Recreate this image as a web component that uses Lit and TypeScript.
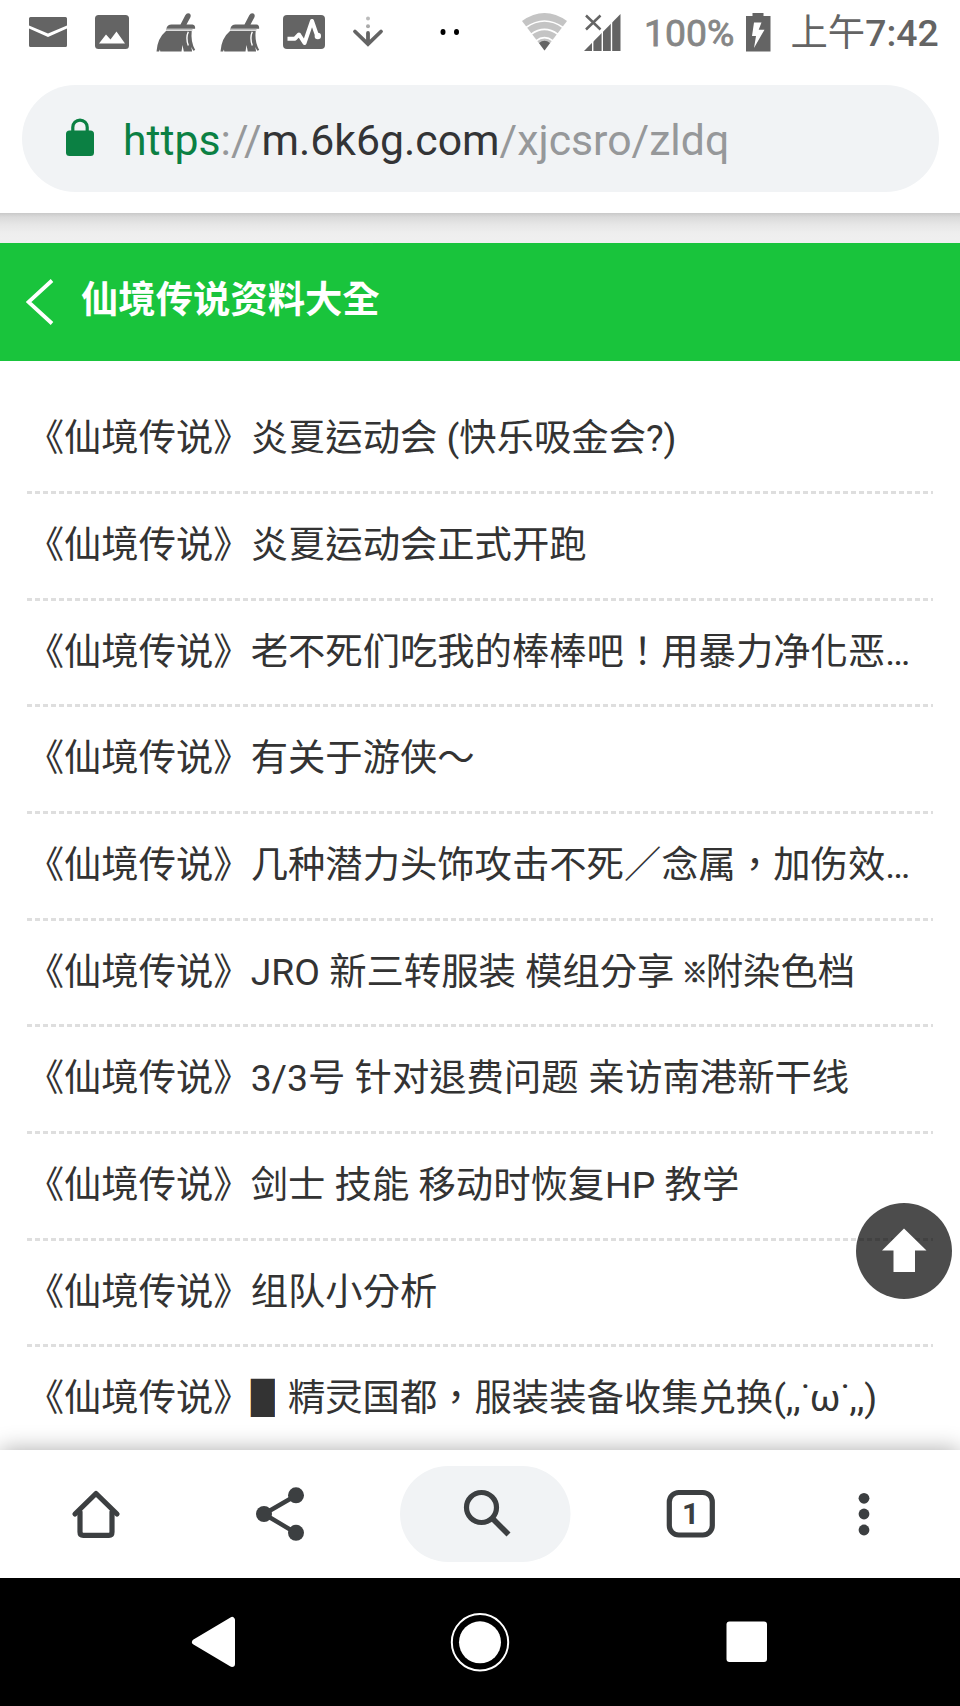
import { LitElement, html, css, svg } from "lit";
import { customElement } from "lit/decorators.js";

const SANS = css`Roboto, "Noto Sans CJK TC", "Noto Sans CJK SC", sans-serif`;

@customElement("status-bar")
class StatusBar extends LitElement {
  static styles = css`
    :host { display: block; height: 64px; position: relative; color: #646464; font: 500 37.33px ${SANS}; }
    .icons { display: block; }
    .battery-text, .clock { position: absolute; top: 11px; line-height: 44px; white-space: nowrap; }
    .battery-text { left: 644px; color: #868686; font-weight: 400; -webkit-text-stroke: 0.8px #868686; }
    .clock { left: 790.5px; }
    .period { font-weight: 400; }
  `;
  broom(x: number) {
    return svg`<g transform="translate(${x} 0)" fill="#646464">
      <path d="M28.8 15.2 Q30.5 12.3 33 13.6 Q35 15 33.8 17.6 L30 24.5 H36 Q39 25 38.6 28.7 H9.8 Q11 24.5 15 24.5 H24 Z"/>
      <path d="M9.5 31 H35.2 Q34 42 38.7 50 L36.8 50.8 L34.8 47 L35.6 51.4 H27.3 L26 45 L25 51.4 H3.8 L3.4 49.5 L2.6 51.4 H0 Q1 38 9.5 31 Z"/>
      <path d="M9.500 29.700 H36" stroke="#bbb" stroke-width="1.600"/>
      <path d="M31.8 31.800 Q29 38 31.8 45.500" fill="none" stroke="#fff" stroke-width="1.4"/>
    </g>`;
  }
  render() {
    return html`
      <svg class="icons" width="960" height="64" viewBox="0 0 960 64">
        <path fill="#646464" d="M29 18.500 q0-1.500 1.500-1.500 h35 q1.500 0 1.500 1.500 v7 L48 33.500 L29 25.500 Z M29 28.500 L48 37 L67 28.500 V45.500 q0 1.500-1.500 1.500 H30.500 q-1.500 0-1.500-1.500 Z"/>
        <rect x="95" y="15" width="34" height="34" rx="3.5" fill="#646464"/>
        <path fill="#fff" d="M99 43.500 L106 34.500 L110.500 39.500 L116.500 31.500 L125 43.500 Z"/>
        ${this.broom(156.5)}${this.broom(220.5)}
        <rect x="283" y="15" width="42" height="34" rx="4" fill="#646464"/>
        <path fill="none" stroke="#fff" stroke-width="4" stroke-linejoin="round" d="M287.500 38.700 H295 L299 34.500 L304.500 43 L312 21 L316.500 34"/>
        <circle cx="317.8" cy="36" r="3.2" fill="#fff"/>
        <circle cx="368" cy="18.5" r="2" fill="#bbb"/><circle cx="368" cy="26.3" r="2" fill="#aaa"/>
        <path fill="none" stroke="#646464" stroke-width="3.8" d="M368 33 V43 M355 31.500 L368 44 L381 31.500" stroke-linecap="round"/>
        <ellipse cx="443" cy="32" rx="2.5" ry="3"/><ellipse cx="456.5" cy="32" rx="2.5" ry="3"/>
        <path fill="#c4c4c4" d="M522 21 Q544.500 5 567 21 L544.500 50.500 Z"/>
        <g fill="none" stroke="#fff" stroke-width="1.6">
          <path d="M526 27.500 Q544.500 14.500 563 27.500"/><path d="M531 34.300 Q544.500 24.500 558 34.300"/><path d="M536 40.800 Q544.500 34.500 553 40.800"/>
        </g>
        <path fill="#646464" d="M539 43 Q544.500 38.500 550 43 L544.500 50.500 Z"/>
        <path fill="#646464" d="M584 51 L620.500 14 V51 Z"/>
        <path stroke="#fff" stroke-width="1.4" d="M592.700 38V51 M602.300 28V51 M611.500 18V51"/>
        <path stroke="#646464" stroke-width="2.5" d="M586 15.500 L600.500 29.500 M600.500 15.500 L586 29.500"/>
        <path fill="#646464" d="M752.500 13 H763.500 V16 H770.500 V51.500 H746 V16 H752.500 Z"/>
        <path fill="#fff" d="M754 22.500 H761.500 L758.700 29.700 H764.500 L754 48 L756 36 H752 Z"/>
      </svg>
      <span class="battery-text">100%</span>
      <span class="clock"><span class="period">上午</span>7:42</span>`;
  }
}

@customElement("address-bar")
class AddressBar extends LitElement {
  static styles = css`
    :host { display: block; padding: 21px 21px 21.33px 21.7px; }
    .pill { height: 107px; border-radius: 54px; background: #f1f3f5; display: flex; align-items: center; padding-left: 43.3px; }
    .lock { width: 30px; height: 38px; margin: -4px 28px 0 0; flex: none; }
    .url { font: 400 42.75px/50px Roboto, sans-serif; color: #96989a; white-space: nowrap; padding-top: 2px; }
    .scheme { color: #0b8043; }
    .host { color: #333436; }
  `;
  render() {
    return html`<div class="pill">
      <svg class="lock" viewBox="0 0 30 38"><rect x="1" y="12.5" width="28" height="25.5" rx="3.5" fill="#0b8043"/><path d="M7.800 14 V9.300 a7.200 7.200 0 0 1 14.400 0 V14" fill="none" stroke="#0b8043" stroke-width="3.2"/></svg>
      <div class="url"><span class="scheme">https</span>://<span class="host">m.6k6g.com</span>/xjcsro/zldq</div>
    </div>`;
  }
}

@customElement("article-list")
class ArticleList extends LitElement {
  static styles = css`
    :host { display: block; padding: 26.67px 26.67px 0; background: #fff; }
    .row { height: 106.667px; box-sizing: border-box; font: 400 37.333px/103px ${SANS}; color: #333; white-space: pre;
      background: repeating-linear-gradient(90deg, #dedede 0 5px, transparent 5px 8px) left bottom / 100% 3px no-repeat; }
    .block { display: inline-block; width: 28px; font: 32.4px/38px "DejaVu Sans Mono", monospace; vertical-align: 2px; transform: scaleX(1.2); transform-origin: left center; margin-right: 0; }
    .mark { display: inline-block; width: 22.1px; font: 700 26px/30px "Noto Sans CJK TC", sans-serif; vertical-align: 3px; text-indent: -2px; -webkit-text-stroke: 0.8px #333; }
  `;
  titles = [
    "炎夏运动会 (快乐吸金会?)",
    "炎夏运动会正式开跑",
    "老不死们吃我的棒棒吧！用暴力净化恶…",
    "有关于游侠～",
    "几种潜力头饰攻击不死／念属，加伤效…",
    "JRO 新三转服装 模组分享 ※附染色档",
    "3/3号 针对退费问题 亲访南港新干线",
    "剑士 技能 移动时恢复HP 教学",
    "组队小分析",
    "█ 精灵国都，服装装备收集兑换(,,˙ω˙,,)",
  ];
  symbol(part: string) {
    if (part === "█") return html`<span class="block">█</span>`;
    if (part === "※") return html`<span class="mark">※</span>`;
    return part;
  }
  render() {
    return this.titles.map((t) => html`<div class="row">《仙境传说》${t.split(/([█※])/).map((p) => this.symbol(p))}</div>`);
  }
}

@customElement("browser-toolbar")
class BrowserToolbar extends LitElement {
  static styles = css`
    :host { display: block; height: 128px; flex: none; background: #fff; position: relative; box-shadow: 0 0 22px rgba(0,0,0,.33); }
    .bar { display: block; }
    .count { font: 700 30px Roboto, sans-serif; fill: #3c3f41; }
  `;
  render() {
    return html`<svg class="bar" width="960" height="128" viewBox="0 0 960 128">
      <rect x="400" y="16" width="170.5" height="96" rx="48" fill="#f1f3f5"/>
      <g fill="none" stroke="#3c3f41" stroke-width="5.2" stroke-linejoin="round" stroke-linecap="round">
        <path d="M75 64 L96 43.500 L117 64"/><path d="M80 62 V82 q0 3.300 3.300 3.300 H109 q3 0 3-3.300 V62"/>
        <path d="M296 45.500 L264 64 L296 83" stroke-width="4.4"/>
        <circle cx="481.500" cy="57.500" r="15"/>
        <path d="M493 69 L508.500 84.500" stroke-linecap="butt" stroke-width="5.6"/>
        <rect x="669.3" y="42.5" width="43" height="42.5" rx="9.5"/>
      </g>
      <g fill="#3c3f41"><circle cx="296" cy="45.300" r="8"/><circle cx="264" cy="64" r="8"/><circle cx="296" cy="82.800" r="8"/>
      <circle cx="864" cy="48.300" r="5.4"/><circle cx="864" cy="64" r="5.4"/><circle cx="864" cy="80" r="5.4"/></g>
      <text class="count" x="690.500" y="74.300" text-anchor="middle">1</text>
    </svg>`;
  }
}

@customElement("app-root")
class AppRoot extends LitElement {
  static styles = css`
    :host { display: flex; flex-direction: column; height: 1706px; width: 960px; background: #fff; overflow: hidden; position: relative; }
    .gap { height: 30px; background: linear-gradient(#c9c9c9 0, #dadada 4px, #e7e7e7 12px, #eeeeee 20px, #f0f0f0); flex: none; }
    .title { height: 117.33px; background: #19c43c; display: flex; align-items: center; flex: none; color: #fff; font: 700 37.333px/44px ${SANS}; }
    .back { margin-left: 26px; width: 28px; height: 46px; }
    .name { margin: -4px 0 0 27px; }
    .content { flex: 1; min-height: 0; overflow: hidden; }
    .top { position: absolute; left: 856px; top: 1203px; }
    .nav { height: 128px; background: #000; display: block; flex: none; position: relative; }
  `;
  render() {
    return html`
      <status-bar></status-bar>
      <address-bar></address-bar>
      <div class="gap"></div>
      <div class="title">
        <svg class="back" viewBox="0 0 28 46"><path d="M26 1.500 L2.500 23 L26 44.500" fill="none" stroke="#fff" stroke-width="3.800"/></svg>
        <div class="name">仙境传说资料大全</div>
      </div>
      <article-list class="content"></article-list>
      <svg class="top" width="96" height="96" viewBox="0 0 96 96"><circle cx="48" cy="48" r="48" fill="#000" fill-opacity=".7"/><path d="M48 25.500 L70.500 47.500 H59 V69 H37.500 V47.500 H26 Z" fill="#fff"/></svg>
      <browser-toolbar></browser-toolbar>
      <svg class="nav" width="960" height="128" viewBox="0 0 960 128">
        <path d="M195 64 L232 42 V86 Z" fill="#fff" stroke="#fff" stroke-width="6" stroke-linejoin="round"/>
        <circle cx="480" cy="64.300" r="28.200" fill="none" stroke="#fff" stroke-width="2"/><circle cx="480" cy="64.300" r="21" fill="#fff"/>
        <rect x="726.500" y="43.500" width="40.500" height="40.500" rx="3" fill="#fff"/>
      </svg>`;
  }
}
